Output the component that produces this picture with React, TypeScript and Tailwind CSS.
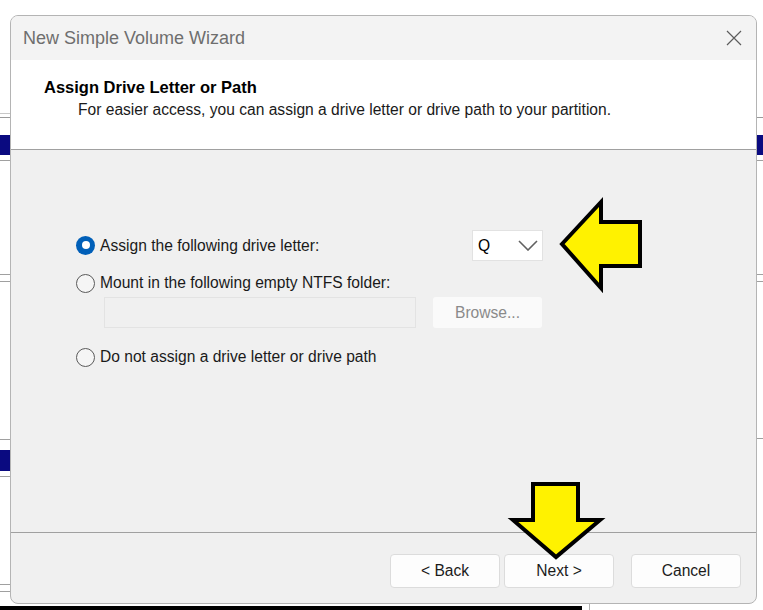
import * as React from "react";

const Radio = ({ checked }: { checked?: boolean }) =>
  checked ? (
    <span className="flex h-[19px] w-[19px] shrink-0 items-center justify-center rounded-full bg-[#005fb8]">
      <span className="h-[8px] w-[8px] rounded-full bg-white" />
    </span>
  ) : (
    <span className="h-[19px] w-[19px] shrink-0 rounded-full border border-[#5a5a5a] bg-[#f5f5f5]" />
  );

const FooterButton = ({ label }: { label: string }) => (
  <button
    type="button"
    className="h-[34px] w-[110px] rounded-[4px] border border-[#dcdcdc] bg-[#fdfdfd] text-[15.6px] text-[#1b1b1b]"
  >
    {label}
  </button>
);

export default function App() {
  return (
    <div className="relative h-[610px] w-[763px] overflow-hidden bg-white font-['Liberation_Sans',Arial,sans-serif]">
      {/* windows behind the dialog */}
      <div className="absolute left-0 top-[113px] h-[1px] w-[10px] bg-[#c8c8c8]" />
      <div className="absolute left-0 top-[117px] h-[1px] w-[10px] bg-[#9a9a9a]" />
      <div className="absolute left-0 top-[135px] h-[20px] w-[10px] bg-[#0a0a80]" />
      <div className="absolute left-0 top-[160px] h-[1px] w-[10px] bg-[#a0a0a0]" />
      <div className="absolute left-0 top-[274px] h-[1px] w-[10px] bg-[#a0a0a0]" />
      <div className="absolute left-0 top-[281px] h-[1px] w-[10px] bg-[#a0a0a0]" />
      <div className="absolute left-0 top-[439px] h-[1px] w-[10px] bg-[#a0a0a0]" />
      <div className="absolute left-0 top-[450px] h-[21px] w-[10px] bg-[#0a0a80]" />
      <div className="absolute left-0 top-[476px] h-[1px] w-[10px] bg-[#a0a0a0]" />
      <div className="absolute left-0 top-[584px] h-[1px] w-[10px] bg-[#a0a0a0]" />
      <div className="absolute left-0 top-[591px] h-[1px] w-[10px] bg-[#a0a0a0]" />
      <div className="absolute right-0 top-[117px] h-[1px] w-[6px] bg-[#9a9a9a]" />
      <div className="absolute right-0 top-[135px] h-[20px] w-[6px] bg-[#0a0a80]" />
      <div className="absolute right-0 top-[160px] h-[1px] w-[6px] bg-[#a0a0a0]" />
      <div className="absolute right-0 top-[274px] h-[1px] w-[6px] bg-[#a0a0a0]" />
      <div className="absolute right-0 top-[281px] h-[1px] w-[6px] bg-[#a0a0a0]" />
      <div className="absolute right-0 top-[438px] h-[1px] w-[6px] bg-[#a0a0a0]" />
      <div className="absolute bottom-0 left-0 h-[4px] w-[582px] bg-black" />
      <div className="absolute bottom-0 left-[589px] h-[9px] w-[1px] bg-[#b0b0b0]" />

      <div className="pl-[10px] pt-[15px]">
        <div className="relative flex h-[589px] w-[747px] flex-col overflow-hidden rounded-[8px] border border-[#b4b4b4] bg-[#f0f0f0]">
          {/* title bar */}
          <div className="flex h-[44px] items-center justify-between bg-[#f3f3f3] pl-[12px] pr-[14px]">
            <span className="text-[18px] text-[#6e6e6e]">New Simple Volume Wizard</span>
            <svg width="16" height="16" viewBox="0 0 16 16">
              <path d="M1 1 L15 15 M15 1 L1 15" stroke="#5c5c5c" strokeWidth="1.2" fill="none" />
            </svg>
          </div>

          {/* header */}
          <div className="h-[90px] border-b border-[#a0a0a0] bg-white pl-[33px] pt-[17px]">
            <div className="text-[16.5px] font-bold leading-[21px] text-black">Assign Drive Letter or Path</div>
            <div className="mt-[2px] pl-[34px] text-[15.6px] leading-[20px] text-[#1a1a1a]">
              For easier access, you can assign a drive letter or drive path to your partition.
            </div>
          </div>

          {/* body */}
          <div className="h-[383px] border-b border-[#a0a0a0] pl-[65px] pt-[80px] text-[15.6px] text-[#1a1a1a]">
            <div className="w-[467px]">
              <div className="flex h-[31px] items-center justify-between">
                <div className="flex items-center gap-[5px]">
                  <Radio checked />
                  <span>Assign the following drive letter:</span>
                </div>
                <div className="flex h-[31px] w-[71px] items-center justify-between border border-[#e2e2e2] bg-white pl-[5px] pr-[4px]">
                  <span className="text-[15.6px] text-black">Q</span>
                  <svg width="20" height="11" viewBox="0 0 20 11">
                    <path d="M1 1 L10 10 L19 1" stroke="#616161" strokeWidth="1.6" fill="none" />
                  </svg>
                </div>
              </div>
              <div className="mt-[12px] flex h-[20px] items-center gap-[5px]">
                <Radio />
                <span>Mount in the following empty NTFS folder:</span>
              </div>
              <div className="mt-[4px] flex items-center pl-[28px]">
                <div className="h-[31px] w-[312px] border border-[#e3e3e3] bg-[#f0f0f0]" />
                <div className="ml-[17px] flex h-[31px] w-[109px] items-center justify-center rounded-[3px] bg-[#fafafa] text-[#8a8a8a]">
                  Browse...
                </div>
              </div>
              <div className="mt-[19px] flex h-[20px] items-center gap-[5px]">
                <Radio />
                <span>Do not assign a drive letter or drive path</span>
              </div>
            </div>
          </div>

          {/* footer */}
          <div className="flex flex-1 items-start justify-end pr-[15px] pt-[21px]">
            <div className="flex gap-[4px]">
              <FooterButton label="< Back" />
              <FooterButton label="Next >" />
            </div>
            <div className="ml-[17px]">
              <FooterButton label="Cancel" />
            </div>
          </div>
        </div>
      </div>

      {/* annotation arrows */}
      <svg className="pointer-events-none absolute left-0 top-0" width="763" height="610">
        <polygon
          points="562,244 601,202 601,222 640,222 640,266 601,266 601,288"
          fill="#fff200"
          stroke="#000"
          strokeWidth="4"
          strokeLinejoin="miter"
        />
        <polygon
          points="533,484 578,484 578,520 600,520 556,557 513,520 533,520"
          fill="#fff200"
          stroke="#000"
          strokeWidth="4"
          strokeLinejoin="miter"
        />
      </svg>
    </div>
  );
}
